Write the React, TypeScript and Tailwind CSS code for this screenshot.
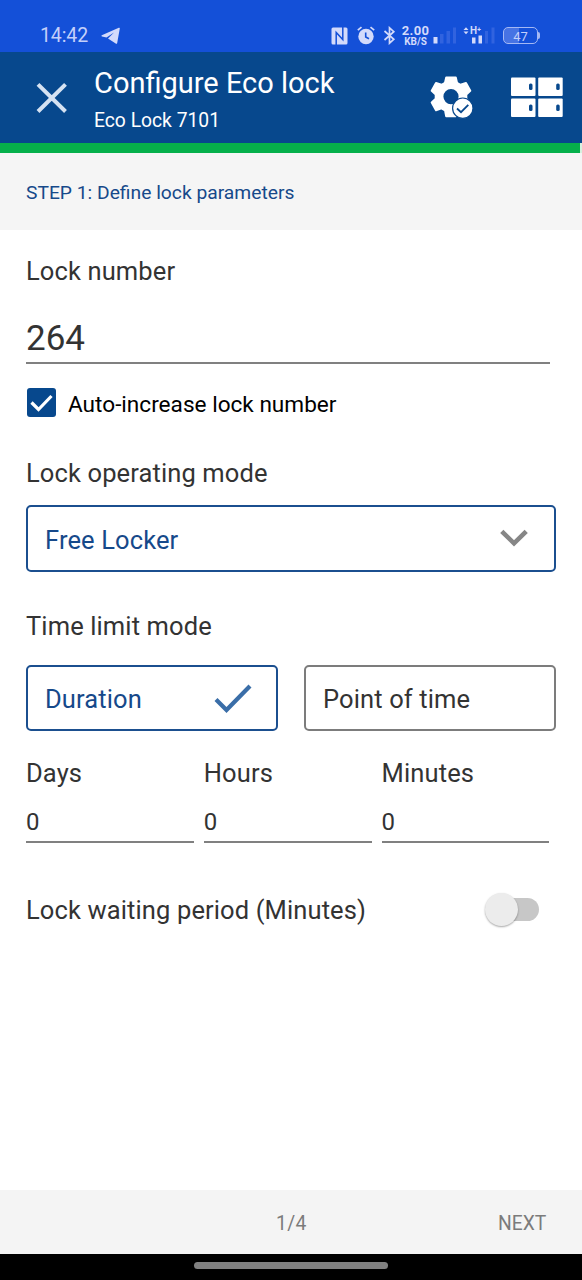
import { useState } from "react"
import type { ReactNode } from "react"

function StatusBar() {
  return (
    <div className="flex h-[52px] items-start bg-[#1450d8] pl-10 text-[#c3cffa]">
      <span className="mt-[21px] w-[49px] text-[19.500px] leading-[29px] tracking-[-0.1px]">14:42</span>
      <svg className="mt-[27px] ml-[12px]" width="20" height="18" viewBox="0 0 20 18" fill="#d3dafb">
        <path d="M0.800 8.300 17.800 0.800c.7-.3 1.200 0 1 .8L16.200 16c-.2.900-.8 1.100-1.500.6L7 11.500 13 5.500 5.500 10.500 1 9.500c-.6-.1-.7-.9-.2-1.200Z" />
      </svg>

      {/* NFC */}
      <svg className="mt-[27px] ml-[210px]" width="18" height="18" viewBox="0 0 18 18">
        <rect x="0.500" y="0.500" width="16" height="17" rx="1.500" fill="#d3dafb" />
        <path d="M5.200 18V5.500L11.800 12.500V0" fill="none" stroke="#1450d8" strokeWidth="1.500" />
      </svg>

      {/* Alarm */}
      <svg className="mt-[26px] ml-[8px]" width="18" height="19" viewBox="0 0 18 19" fill="none">
        <circle cx="9" cy="10.500" r="7.700" fill="#d3dafb" />
        <path d="M0.800 4.200 4.500 1.200M17.200 4.200 13.500 1.200" stroke="#d3dafb" strokeWidth="1.700" />
        <path d="M8.700 6.500V11L12 12.800" stroke="#1450d8" strokeWidth="1.600" />
      </svg>

      {/* Bluetooth */}
      <svg className="mt-[26px] ml-[8px]" width="13" height="19" viewBox="0 0 13 19" fill="none" stroke="#d3dafb" strokeWidth="1.700">
        <path d="M1.500 5 10.800 13.300 6.500 17.200V1.800L10.800 5.700 1.500 14" />
      </svg>

      <div className="mt-[24px] ml-[5px] flex w-[29px] flex-col items-center font-bold text-[#d3dafb]">
        <span className="text-[13px] leading-[14px] tracking-[0.3px]">2.00</span>
        <span className="text-[10px] leading-[8px]">KB/S</span>
      </div>

      {/* First SIM */}
      <svg className="mt-[27px] ml-[3px]" width="24" height="17" viewBox="0 0 24 17" fill="#3163df">
        <rect x="0.500" y="10" width="4" height="6.500" fill="#d3dafb" />
        <rect x="7" y="7" width="3.500" height="9.500" />
        <rect x="13.500" y="4" width="3.500" height="12.500" />
        <rect x="20" y="0.500" width="3" height="16" />
      </svg>

      {/* Second SIM with the data badge */}
      <div className="relative mt-[27px] ml-[6px] h-[17px] w-[33px]">
        <svg width="33" height="17" viewBox="0 0 33 17" fill="#d3dafb">
          <path d="M0.500 3 3 0.200 5.500 3ZM0.500 4.500 3 7.300 5.500 4.500Z" />
          <rect x="9" y="10.500" width="3.500" height="6" />
          <rect x="15.500" y="8.500" width="3.500" height="8" />
          <rect x="22" y="4" width="3" height="12.500" fill="#3163df" />
          <rect x="28.500" y="0.500" width="3" height="16" fill="#3163df" />
        </svg>
        <span className="absolute top-[-1px] left-[7px] text-[10px] leading-[9px] font-bold text-[#d3dafb]">H⁺</span>
      </div>

      {/* Battery */}
      <div className="mt-[27px] ml-[7px] flex items-center">
        <div className="flex h-[17px] w-[35px] items-center justify-center rounded-[5px] border-[1.500px] border-[#a4b8f4] bg-linear-to-r from-[#4773e4] from-45% to-[#1450d8] to-45% pt-[1px] text-[13px] leading-none">
          47
        </div>
        <div className="h-[7px] w-[2px] rounded-r bg-[#a4b8f4]" />
      </div>
    </div>
  )
}

function Header() {
  return (
    <header className="flex h-[91px] bg-[#07488d] text-white">
      <button className="mt-[30px] ml-9 h-8 w-8" aria-label="Close">
        <svg width="32" height="32" viewBox="0 0 32 32" stroke="#d5e2f2" strokeWidth="4">
          <path d="M2 2.300 29.500 29.500M29.500 2.300 2 29.500" />
        </svg>
      </button>
      <div className="ml-[26px] w-[336px] pt-[12px]">
        <h1 className="text-[29px] leading-[38px]">Configure Eco lock</h1>
        <p className="mt-[5px] text-[19.300px] leading-[28px]">Eco Lock 7101</p>
      </div>
      <svg className="mt-[23px]" width="44" height="46" viewBox="0 0 44 46">
        <path
          fill="#fff"
          stroke="#fff"
          strokeWidth="2"
          strokeLinejoin="round"
          fillRule="evenodd"
          d="M16.200 2.500H25.800L27 7.800 30.500 9.800 36 8 40.300 15.800 36.300 19.600V23.600L40.300 27.400 36 35.200 30.500 33.400 27 35.400 25.800 41.200H16.200L15 35.400 11.500 33.400 6 35.200 1.700 27.400 5.700 23.600V19.600L1.700 15.800 6 8 11.500 9.800 15 7.800ZM21 13A8.600 8.600 0 1 0 21 30.200 8.600 8.600 0 1 0 21 13Z"
        />
        <circle cx="32.800" cy="33.200" r="10.200" fill="#fff" stroke="#07488d" strokeWidth="1.200" />
        <path d="M27 33.500 31 37.200 38.300 29.800" fill="none" stroke="#07488d" strokeWidth="1.800" />
      </svg>
      <svg className="mt-[25px] ml-[37px]" width="53" height="42" viewBox="0 0 53 42">
        <g fill="#fff">
          <rect x="0" y="0.500" width="24.500" height="18.500" rx="1" />
          <rect x="27.200" y="0.500" width="24.500" height="18.500" rx="1" />
          <rect x="0" y="21.500" width="24.500" height="18.500" rx="1" />
          <rect x="27.200" y="21.500" width="24.500" height="18.500" rx="1" />
        </g>
        <g fill="#07488d">
          <rect x="18" y="6.500" width="3.500" height="6.500" rx="1.500" />
          <rect x="45.200" y="6.500" width="3.500" height="6.500" rx="1.500" />
          <rect x="18" y="27.500" width="3.500" height="6.500" rx="1.500" />
          <rect x="45.200" y="27.500" width="3.500" height="6.500" rx="1.500" />
        </g>
      </svg>
    </header>
  )
}

function Label({ children }: { children: ReactNode }) {
  return <div className="text-[25.500px] leading-[30px] tracking-[0.120px] whitespace-nowrap">{children}</div>
}

const units = ["Days", "Hours", "Minutes"]

export default function App() {
  const [autoIncrease, setAutoIncrease] = useState(true)
  const [mode, setMode] = useState<"duration" | "point">("duration")

  return (
    <div className="flex h-[1280px] w-[582px] flex-col overflow-hidden bg-white font-[Roboto,sans-serif] text-[#333333]">
      <StatusBar />
      <Header />

      {/* Progress */}
      <div className="h-[10px] bg-[#d5f2df]">
        <div className="h-[9.500px] w-[580px] bg-[#06b04b]" />
      </div>

      <div className="flex h-[77px] items-center bg-[#f5f5f5] pt-[4px] pl-[26px] text-[19.250px] text-[#16498a]">
        STEP 1: Define lock parameters
      </div>

      <main className="flex-1 px-[26px] pt-[26px]">
        <Label>Lock number</Label>
        <div className="mt-[32px] h-[46px] w-[523.500px] border-b-2 border-[#808080] text-[35px] leading-[42px]">264</div>

        <button className="mt-[24px] ml-[1px] flex h-[29px] items-center text-black" onClick={() => setAutoIncrease(!autoIncrease)}>
          <span className="flex h-[29px] w-[29px] items-center justify-center rounded-[3px] bg-[#07488d]">
            {autoIncrease && (
              <svg width="25" height="20" viewBox="0 0 25 20" fill="none" stroke="#fff" strokeWidth="3.200">
                <path d="M2.500 9.500 9.500 16.500 22.500 3" />
              </svg>
            )}
          </span>
          <span className="ml-[12px] pt-[4px] text-[22.600px] leading-[28px] whitespace-nowrap">Auto-increase lock number</span>
        </button>

        <div className="mt-[41px]">
          <Label>Lock operating mode</Label>
        </div>
        <button className="mt-[17px] flex h-[67px] w-[530px] items-center justify-between rounded-[5px] border-2 border-[#1b4f8f] pt-[2px] pr-[26px] pl-[17px] text-[#16498a]">
          <Label>Free Locker</Label>
          <svg className="mb-[4px]" width="28" height="18" viewBox="0 0 28 18" fill="none" stroke="#868686" strokeWidth="4.600">
            <path d="M1.800 2.300 14 14.300 26.200 2.300" />
          </svg>
        </button>

        <div className="mt-[39px]">
          <Label>Time limit mode</Label>
        </div>
        <div className="mt-[24px] flex gap-[26px]">
          <button
            className="flex h-[66px] w-[252px] items-center justify-between rounded-[5px] border-2 border-[#1b4f8f] pt-[1px] pr-[24px] pl-[17px] text-[#16498a]"
            onClick={() => setMode("duration")}
          >
            <Label>Duration</Label>
            {mode === "duration" && (
              <svg width="38" height="30" viewBox="0 0 38 30" fill="none" stroke="#3a6ea8" strokeWidth="4.200">
                <path d="M2 15.500 12.500 26 36 2" />
              </svg>
            )}
          </button>
          <button
            className="flex h-[66px] w-[252px] items-center rounded-[5px] border-2 border-[#7c7c7c] pt-[1px] pl-[17px]"
            onClick={() => setMode("point")}
          >
            <Label>Point of time</Label>
          </button>
        </div>

        <div className="mt-[27px] flex gap-[10px]">
          {units.map((unit) => (
            <div key={unit} className="w-[167.800px]">
              <Label>{unit}</Label>
              <div className="mt-[17px] h-[38px] border-b-2 border-[#808080] text-[24px] leading-[35px]">0</div>
            </div>
          ))}
        </div>

        <div className="mt-[48px] flex h-[38px] w-[513px] items-center justify-between">
          <Label>Lock waiting period (Minutes)</Label>
          <div className="mb-[2px] flex h-[23px] w-[55px] items-center justify-end">
            <div className="flex h-[23px] w-[40px] items-center rounded-full bg-[#c7c7c7]">
              <div className="-ml-[14px] h-[33px] w-[33px] shrink-0 rounded-full bg-[#ececec] shadow-[0_1px_2px_rgba(0,0,0,0.35)]" />
            </div>
          </div>
        </div>
      </main>

      <footer className="flex h-[64px] items-center bg-[#f4f4f4] pt-[4px] text-[19.300px] text-[#7b7b7b]">
        <span className="ml-[276px] w-[222px] tracking-[0.3px]">1/4</span>
        <button>NEXT</button>
      </footer>
      <div className="flex h-[26px] justify-center bg-black pt-[8px]">
        <div className="h-[7px] w-[194px] rounded-full bg-[#808080]" />
      </div>
    </div>
  )
}
